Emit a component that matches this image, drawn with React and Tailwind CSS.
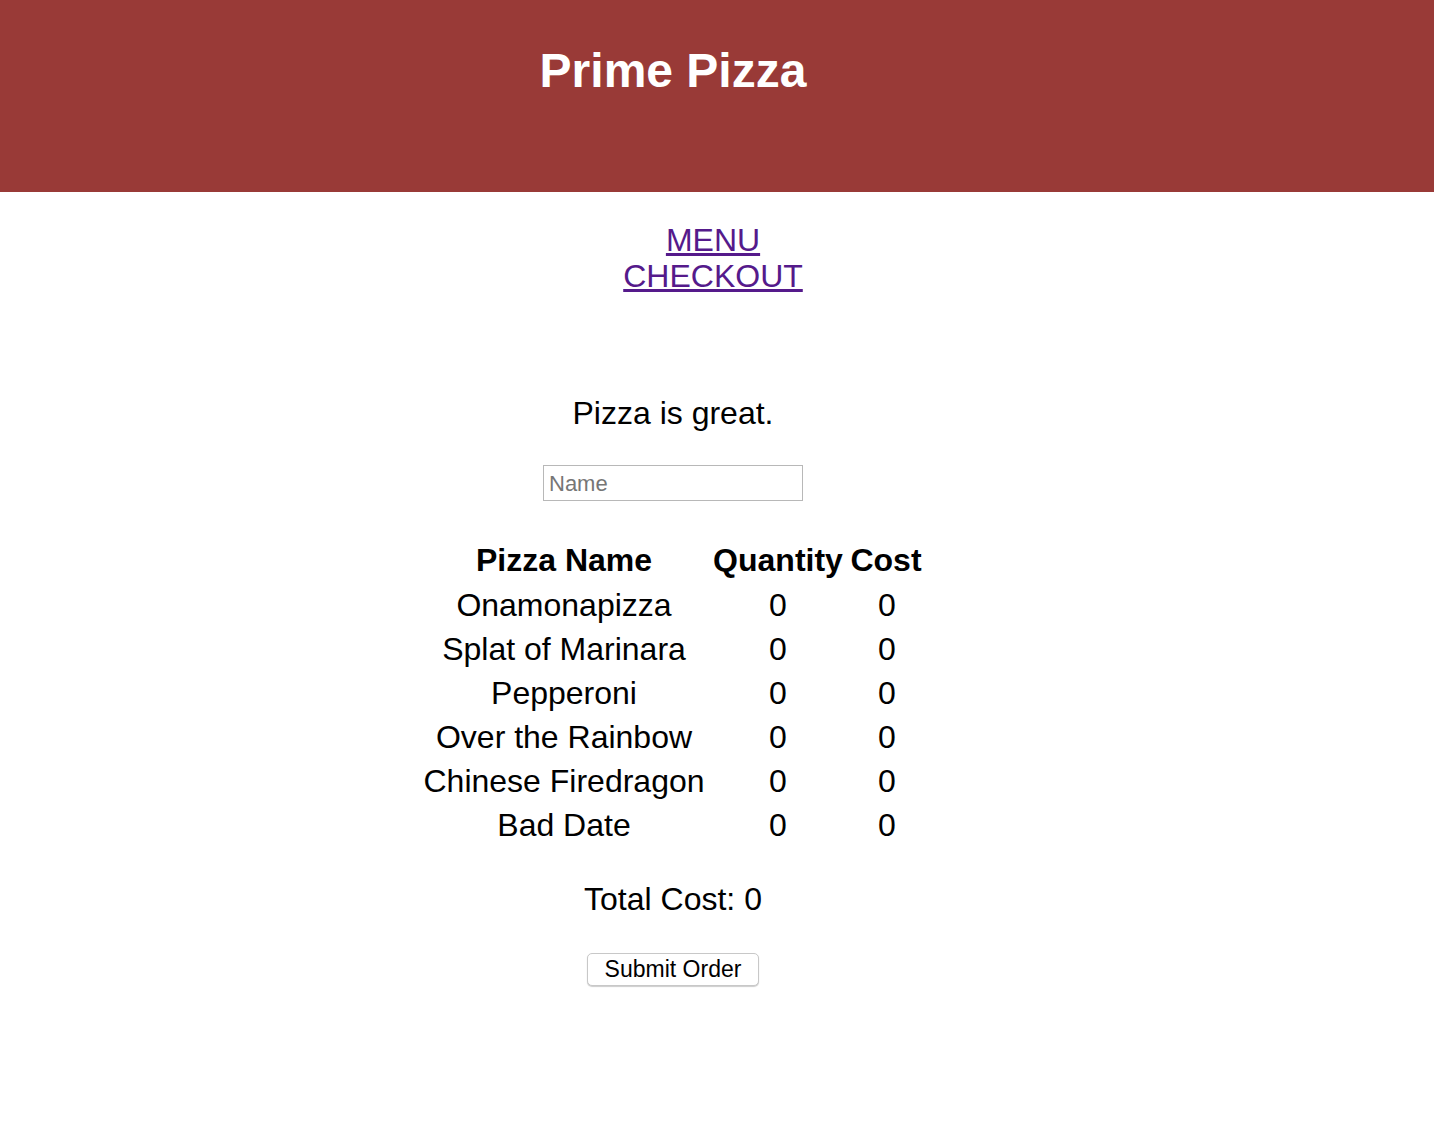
import { useState } from "react";

const pizzas = [
  "Onamonapizza",
  "Splat of Marinara",
  "Pepperoni",
  "Over the Rainbow",
  "Chinese Firedragon",
  "Bad Date",
];

export default function App() {
  const [name, setName] = useState("");

  return (
    <div className="min-h-[1124px] bg-white text-black font-['Liberation_Sans',Arial,Helvetica,sans-serif]">
      {/* header bar */}
      <header className="h-[192px] bg-[#993a37]">
        <div className="w-[1346px] pt-[43px] text-center">
          <h1 className="text-[48px] leading-[55px] font-bold text-white">Prime Pizza</h1>
        </div>
      </header>

      {/* nav links */}
      <nav className="w-[1346px] pl-[80px] mt-[30px] text-center text-[32px] leading-[36px]">
        <div>
          <a href="#" className="underline text-[#551a8b]">MENU</a>
        </div>
        <div>
          <a href="#" className="underline text-[#551a8b]">CHECKOUT</a>
        </div>
      </nav>

      <main className="w-[1346px] flex flex-col items-center">
        <p className="mt-[101px] text-[32px] leading-[37px]">Pizza is great.</p>

        <input
          type="text"
          value={name}
          onChange={(e) => setName(e.target.value)}
          placeholder="Name"
          className="mt-[33px] w-[260px] h-[36px] border border-[#b8b8b8] px-[5px] pt-[2px] text-[22px] placeholder:text-[#767676] outline-none"
        />

        {/* order table */}
        <div className="mt-[37px] grid grid-cols-[288px_138px_78px] text-[32px] text-center">
          <div className="h-[44px] leading-[44px] font-bold pr-[2px]">Pizza Name</div>
          <div className="h-[44px] leading-[44px] font-bold">Quantity</div>
          <div className="h-[44px] leading-[44px] font-bold">Cost</div>
          {pizzas.map((p) => (
            <div key={p} className="contents">
              <div className="h-[44px] leading-[46px] whitespace-nowrap pr-[2px]">{p}</div>
              <div className="h-[44px] leading-[46px]">0</div>
              <div className="h-[44px] leading-[46px] pl-[2px]">0</div>
            </div>
          ))}
        </div>

        <p className="mt-[34px] text-[32px] leading-[38px]">Total Cost: 0</p>

        <button className="mt-[35px] h-[33px] w-[172px] rounded-[5px] border border-[#c8c8c8] bg-white shadow-[0_1px_1px_rgba(0,0,0,0.2)] text-[23px] leading-none">
          Submit Order
        </button>
      </main>
    </div>
  );
}
